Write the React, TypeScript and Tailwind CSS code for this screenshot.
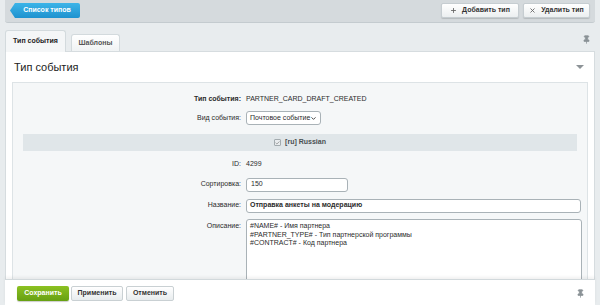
import { Plus, X, Pin, ChevronDown, Check } from "lucide-react";

const font = "font-['Liberation_Sans',Arial,sans-serif]";

function ToolbarButton({ icon, label, w }: { icon: React.ReactNode; label: string; w: string }) {
  return (
    <button
      className={`${w} h-[15px] flex items-center justify-center gap-[5px] rounded-[2px] bg-gradient-to-b from-[#ffffff] to-[#eceff0] border border-[#c6cdd1] shadow-[0_1px_1px_rgba(0,0,0,0.15)] text-[7px] font-bold text-[#333]`}
    >
      {icon}
      {label}
    </button>
  );
}

function Row({ label, bold, h, children, top }: { label: string; bold?: boolean; h: string; children: React.ReactNode; top?: boolean }) {
  return (
    <div className={`flex ${top ? "items-start" : "items-center"} ${h}`}>
      <div className={`w-[228px] text-right text-[7px] text-[#2b2b2b] ${bold ? "font-bold" : ""} ${top ? "pt-[2px]" : ""}`}>
        {label}
      </div>
      <div className="ml-[5px] flex-1 text-[7px] text-[#2b2b2b]">{children}</div>
    </div>
  );
}

export default function App() {
  return (
    <div className={`w-[600px] h-[305px] overflow-hidden flex flex-col bg-[#e8ecee] ${font}`}>
      {/* toolbar */}
      <div className="mx-[5px] h-[23px] shrink-0 flex items-start pt-[3px] px-[5px] bg-[#d5dadd] border-b border-[#c4cbcf] rounded-b-[3px]">
        <button className="w-[70px] h-[15px] flex items-center justify-center pl-[4px] text-[7px] font-bold text-white bg-gradient-to-b from-[#3cb4e8] to-[#1e92cf] rounded-r-[2px] [clip-path:polygon(5px_0,100%_0,100%_100%,5px_100%,0_50%)]">
          Список типов
        </button>
        <div className="ml-auto flex gap-[4px]">
          <ToolbarButton w="w-[78px]" label="Добавить тип" icon={<Plus size={7} strokeWidth={3} className="text-[#666]" />} />
          <ToolbarButton w="w-[67px]" label="Удалить тип" icon={<X size={7} strokeWidth={3} className="text-[#666]" />} />
        </div>
      </div>

      {/* tabs */}
      <div className="h-[28px] shrink-0 flex items-end px-[5px] relative">
        <div className="w-[61px] h-[22px] flex items-center justify-center bg-[#f4f6f7] border border-b-0 border-[#d3dadd] rounded-t-[3px] text-[7px] font-bold text-[#222] -mb-px relative z-10">
          Тип события
        </div>
        <div className="ml-[5px] w-[49px] h-[17px] flex items-center justify-center bg-gradient-to-b from-white to-[#f0f3f4] border border-b-0 border-[#d3dadd] rounded-t-[3px] text-[7px] font-bold text-[#555]">
          Шаблоны
        </div>
        <Pin size={9} className="absolute right-[9px] top-[12px] text-[#8a9296] fill-[#8a9296]" />
      </div>

      {/* panel */}
      <div className="mx-[5px] flex-1 min-h-0 overflow-hidden bg-white border border-[#d6dcdf] border-b-0 flex flex-col">
        <div className="h-[30px] shrink-0 flex items-center pl-[8px] pr-[10px]">
          <span className="text-[11px] text-[#222]">Тип события</span>
          <span className="ml-auto w-0 h-0 border-l-[4px] border-r-[4px] border-t-[4px] border-l-transparent border-r-transparent border-t-[#8d9397]" />
        </div>
        <div className="mx-[6px] flex-1 min-h-0 overflow-hidden bg-[#f5f7f8] border border-[#dde3e6] border-b-0 pt-[8px]">
          <Row label="Тип события:" bold h="h-[16px]">
            PARTNER_CARD_DRAFT_CREATED
          </Row>
          <Row label="Вид события:" h="h-[22px]">
            <div className="w-[75px] h-[14px] flex items-center justify-between pl-[3px] pr-[3px] bg-white border border-[#a9b2b7] rounded-[3px] whitespace-nowrap">
              <span>Почтовое событие</span>
              <ChevronDown size={7} strokeWidth={3} className="text-[#333] shrink-0" />
            </div>
          </Row>
          <div className="mt-[5px] mx-[10px] h-[17px] flex items-center justify-center gap-[4px] bg-[#e0e6e9] text-[7px] font-bold text-[#4a4f52]">
            <span className="w-[7px] h-[7px] flex items-center justify-center bg-[#e9ecee] border border-[#a3abaf] rounded-[1px]">
              <Check size={6} strokeWidth={3} className="text-[#777]" />
            </span>
            [ru] Russian
          </div>
          <div className="mt-[4px]">
            <Row label="ID:" h="h-[19px]">
              4299
            </Row>
            <Row label="Сортировка:" h="h-[21px]">
              <div className="w-[102px] h-[14px] flex items-center px-[4px] bg-white border border-[#a9b2b7] rounded-[3px]">150</div>
            </Row>
            <Row label="Название:" h="h-[21px]">
              <div className="w-[335px] h-[14px] flex items-center px-[3px] bg-white border border-[#a9b2b7] rounded-[3px] font-bold">
                Отправка анкеты на модерацию
              </div>
            </Row>
            <div className="pt-[3px]">
              <Row label="Описание:" h="h-[80px]" top>
                <div className="w-[336px] h-[80px] px-[3px] pt-[2px] bg-white border border-[#a9b2b7] rounded-t-[3px] leading-[8.5px]">
                  <div>#NAME# - Имя партнера</div>
                  <div>#PARTNER_TYPE# - Тип партнерской программы</div>
                  <div>#CONTRACT# - Код партнера</div>
                </div>
              </Row>
            </div>
          </div>
        </div>
      </div>

      {/* footer */}
      <div className="mx-[5px] h-[26px] shrink-0 flex items-center pl-[12px] pr-[10px] pt-[2px] bg-white border-t border-[#d2d9dc] shadow-[0_-2px_3px_rgba(0,0,0,0.06)] gap-[2px]">
        <button className="w-[52px] h-[15px] flex items-center justify-center rounded-[2px] bg-gradient-to-b from-[#8cc122] to-[#66a012] text-[7px] font-bold text-white shadow-[0_1px_1px_rgba(0,0,0,0.2)]">
          Сохранить
        </button>
        <button className="w-[52px] h-[15px] flex items-center justify-center rounded-[2px] bg-gradient-to-b from-white to-[#e8ecee] border border-[#c9d0d3] text-[7px] font-bold text-[#333]">
          Применить
        </button>
        <button className="ml-[1px] w-[48px] h-[15px] flex items-center justify-center rounded-[2px] bg-gradient-to-b from-white to-[#e8ecee] border border-[#c9d0d3] text-[7px] font-bold text-[#333]">
          Отменить
        </button>
        <Pin size={9} className="ml-auto text-[#8a9296] fill-[#8a9296]" />
      </div>
    </div>
  );
}
